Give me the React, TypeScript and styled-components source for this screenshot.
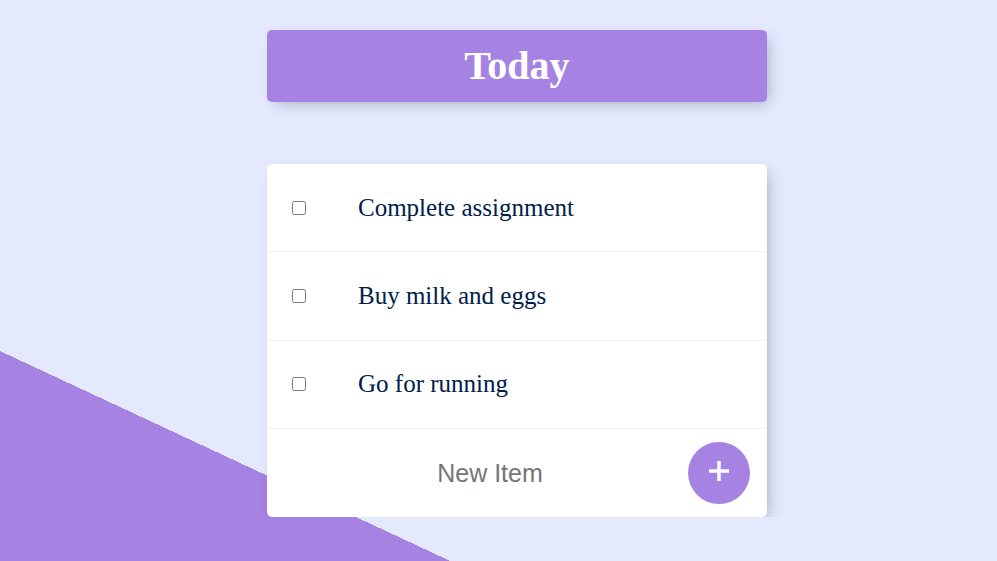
import React from "react";
import styled, { createGlobalStyle } from "styled-components";

const GlobalStyle = createGlobalStyle`
  html {
    height: 100%;
    overflow: hidden;
    background-color: #E4E9FD;
    background-image: linear-gradient(25deg, #A683E3 50%, #E4E9FD 50%);
    background-size: 100% 1167px;
    background-repeat: no-repeat;
  }
  body {
    margin: 0;
    font-family: "Liberation Serif", serif;
  }
`;

const Page = styled.main`
  display: flex;
  flex-direction: column;
  align-items: center;
  padding-top: 30px;
  padding-left: 37px;
`;

const Heading = styled.header`
  width: 500px;
  height: 72px;
  display: flex;
  align-items: center;
  justify-content: center;
  background: #A683E3;
  border-radius: 5px;
  box-shadow: 5px 5px 15px -5px rgba(0, 0, 0, 0.3);
`;

const Title = styled.h1`
  margin: 0;
  color: #fff;
  font-family: "Liberation Serif", serif;
  font-weight: 700;
  font-size: 40px;
  line-height: 1;
`;

const Box = styled.section`
  width: 500px;
  margin-top: 62px;
  background: #fff;
  border-radius: 5px;
  box-shadow: 5px 5px 15px -5px rgba(0, 0, 0, 0.3);
  display: flex;
  flex-direction: column;
`;

const Item = styled.label`
  box-sizing: border-box;
  height: 88.3px;
  display: flex;
  align-items: center;
  border-bottom: 1px solid #F1F1F1;
`;

const Check = styled.input`
  margin: 0 0 0 25px;
  width: 14px;
  height: 14px;
`;

const ItemText = styled.p`
  margin: 0 0 0 52px;
  font-family: "Liberation Serif", serif;
  font-size: 25px;
  color: #00204a;
`;

const Form = styled.form`
  box-sizing: border-box;
  height: 88.3px;
  display: flex;
  align-items: center;
  padding-left: 25px;
`;

const TextInput = styled.input`
  width: 396px;
  height: 60px;
  padding: 0;
  border: none;
  outline: none;
  background: transparent;
  text-align: center;
  font-family: "Liberation Sans", Arial, sans-serif;
  font-size: 25px;
  color: #333;
  &::placeholder {
    color: #757575;
  }
`;

const AddButton = styled.button`
  width: 62px;
  height: 62px;
  border-radius: 50%;
  border: none;
  background: #A683E3;
  color: #fff;
  display: flex;
  align-items: center;
  justify-content: center;
  padding: 0 0 4px;
  cursor: pointer;
`;

const items = ["Complete assignment", "Buy milk and eggs", "Go for running"];

export default function App() {
  return (
    <>
      <GlobalStyle />
      <Page>
        <Heading>
          <Title>Today</Title>
        </Heading>
        <Box>
          {items.map((t) => (
            <Item key={t}>
              <Check type="checkbox" />
              <ItemText>{t}</ItemText>
            </Item>
          ))}
          <Form onSubmit={(e) => e.preventDefault()}>
            <TextInput type="text" placeholder="New Item" />
            <AddButton type="submit" aria-label="Add">
              <svg width="20" height="20" viewBox="0 0 20 20">
                <path d="M10 0v20M0 10h20" stroke="#fff" strokeWidth="3.5" />
              </svg>
            </AddButton>
          </Form>
        </Box>
      </Page>
    </>
  );
}
